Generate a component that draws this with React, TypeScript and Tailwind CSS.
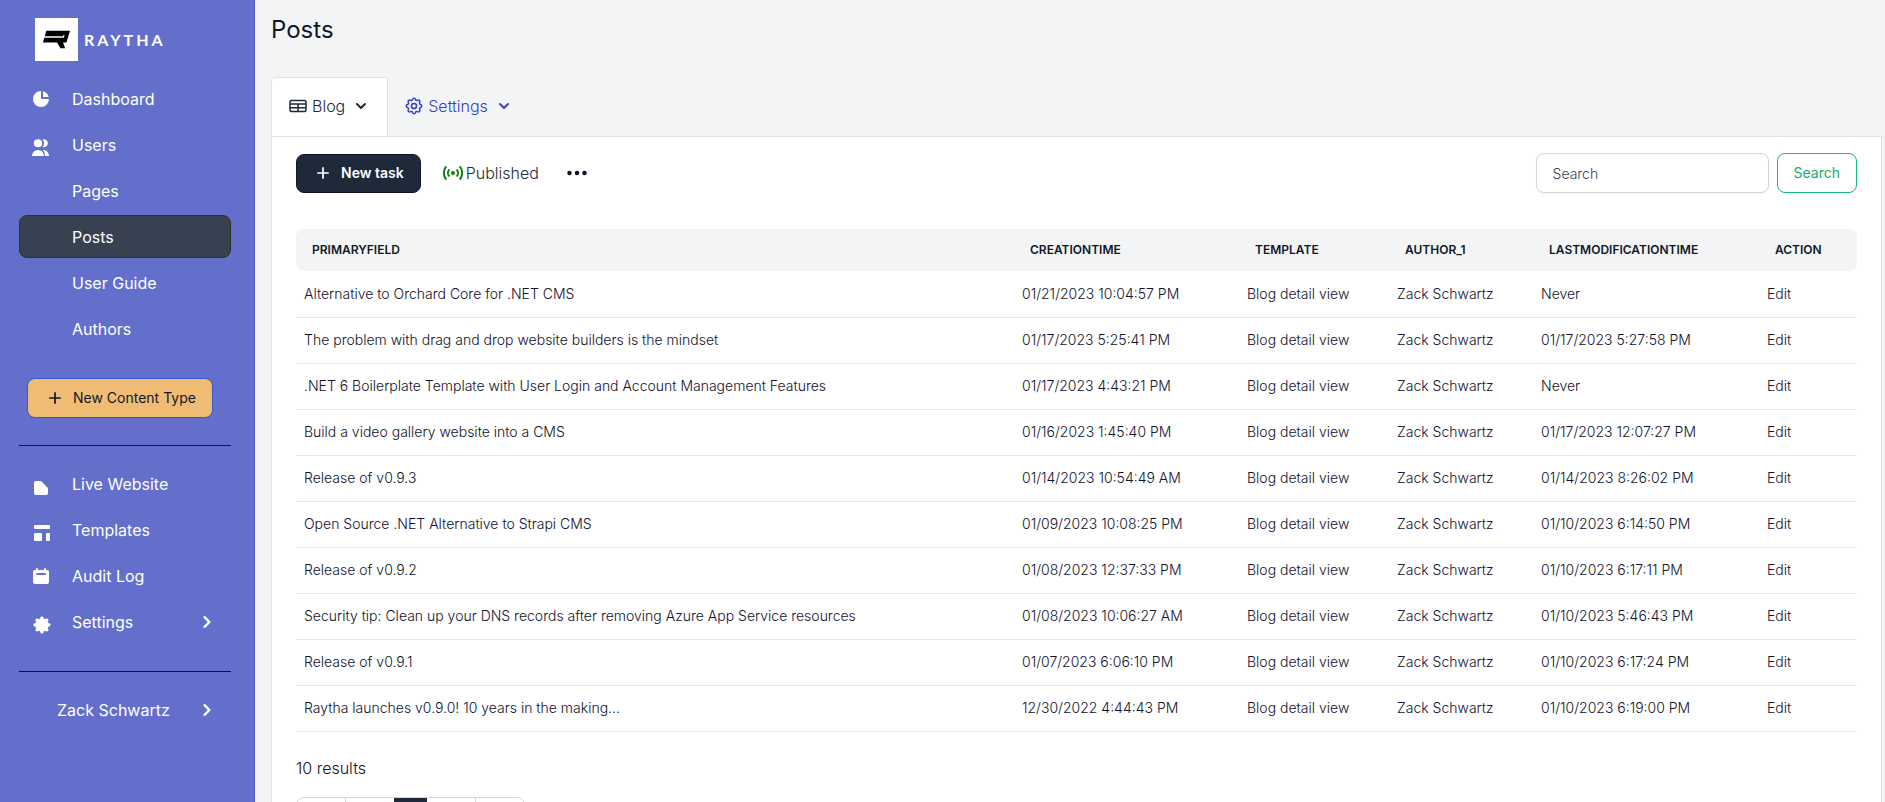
import React from 'react';
import { BsThreeDots } from 'react-icons/bs';
import { HiChartPie, HiChevronRight, HiChevronDown } from 'react-icons/hi';

const UsersIcon = () => (
  <svg className="w-5 h-5" viewBox="1 0 20 20" fill="currentColor">
    <ellipse cx="8" cy="6.200" rx="4.200" ry="4" />
    <path d="M12.600 2.400a4 4 0 1 1 0 7.600 5.600 5.600 0 0 0 0-7.600z" />
    <path d="M2 19c0-3.200 2.500-6 6-6s6 2.800 6 6zM12.800 13.100c3.400-.3 6.200 2.500 6.200 5.900h-4c0-2.400-.8-4.500-2.200-5.900z" />
  </svg>
);

const PageIcon = () => (
  <svg className="w-5 h-5" viewBox="0 0 20 20" fill="currentColor">
    <path d="M3 7a2 2 0 0 1 2-2h4.200a2 2 0 0 1 1.400.6l5.800 5.800a2 2 0 0 1 .6 1.400V17a2 2 0 0 1-2 2H5a2 2 0 0 1-2-2z" />
  </svg>
);

const TemplateIcon = () => (
  <svg className="w-5 h-5" viewBox="0 0 20 20" fill="currentColor">
    <rect x="3" y="3" width="16" height="4" rx="1" />
    <rect x="3" y="11" width="8" height="8" rx="1" />
    <rect x="15" y="11" width="4" height="8" rx="1" />
  </svg>
);

const LogIcon = () => (
  <svg className="w-5 h-5" viewBox="0 0 20 20" fill="currentColor">
    <path fillRule="evenodd" d="M6 2a1 1 0 0 0-1 1v1H4a2 2 0 0 0-2 2v10a2 2 0 0 0 2 2h12a2 2 0 0 0 2-2V6a2 2 0 0 0-2-2h-1V3a1 1 0 1 0-2 0v1H7V3a1 1 0 0 0-1-1zm0 5a1 1 0 0 0 0 2h8a1 1 0 1 0 0-2H6z" />
  </svg>
);

const GEAR_PATH =
  'M10.325 4.317c.426-1.756 2.924-1.756 3.350 0a1.724 1.724 0 0 0 2.573 1.066c1.543-.94 3.310.826 2.370 2.370a1.724 1.724 0 0 0 1.065 2.572c1.756.426 1.756 2.924 0 3.350a1.724 1.724 0 0 0-1.066 2.573c.94 1.543-.826 3.310-2.370 2.370a1.724 1.724 0 0 0-2.572 1.065c-.426 1.756-2.924 1.756-3.350 0a1.724 1.724 0 0 0-2.573-1.066c-1.543.94-3.310-.826-2.370-2.370a1.724 1.724 0 0 0-1.065-2.572c-1.756-.426-1.756-2.924 0-3.350a1.724 1.724 0 0 0 1.066-2.573c-.94-1.543.826-3.310 2.370-2.370.996.608 2.296.07 2.572-1.065z';

const GearIcon = () => (
  <svg className="w-5 h-5" viewBox="0.500 0.500 21 21" fill="currentColor">
    <path d={GEAR_PATH} />
  </svg>
);

const GearOutlineIcon = () => (
  <svg className="w-[18px] h-[18px]" viewBox="1.500 1.500 21 21" fill="none" stroke="currentColor" strokeWidth="1.800">
    <path d={GEAR_PATH} />
    <circle cx="12" cy="12" r="3" />
  </svg>
);

const TableIcon = () => (
  <svg className="w-[18px] h-[18px]" viewBox="0 0 18 18" fill="none" stroke="currentColor" strokeWidth="1.500">
    <rect x="1" y="3.500" width="16" height="11" rx="1.500" />
    <path d="M1 7h16M1 10.800h16M9 7v7.500" />
  </svg>
);

const BroadcastIcon = () => (
  <svg className="w-5 h-5" viewBox="0 0 20 20" fill="none" stroke="currentColor" strokeWidth="2">
    <circle cx="10" cy="10" r="2" fill="currentColor" stroke="none" />
    <path d="M6.400 6.500a5 5 0 0 0 0 7M13.600 6.500a5 5 0 0 1 0 7M3.300 3.400a10 10 0 0 0 0 13.200M16.700 3.400a10 10 0 0 1 0 13.200" />
  </svg>
);

const PlusIcon = () => (
  <svg className="w-4 h-4" viewBox="0 0 16 16" fill="none" stroke="currentColor" strokeWidth="1.700">
    <path d="M8 2.200v11.600M2.200 8h11.600" />
  </svg>
);

const mainLinks = [
  { label: 'Dashboard', icon: <HiChartPie className="w-5 h-5" /> },
  { label: 'Users', icon: <UsersIcon />, low: true },
  { label: 'Pages' },
  { label: 'Posts', active: true },
  { label: 'User Guide' },
  { label: 'Authors' },
];

const systemLinks = [
  { label: 'Live Website', icon: <PageIcon />, low: true },
  { label: 'Templates', icon: <TemplateIcon />, low: true },
  { label: 'Audit Log', icon: <LogIcon /> },
  { label: 'Settings', icon: <GearIcon />, low: true, more: true },
];

const posts = [
  ['Alternative to Orchard Core for .NET CMS', '01/21/2023 10:04:57 PM', 'Never'],
  ['The problem with drag and drop website builders is the mindset', '01/17/2023 5:25:41 PM', '01/17/2023 5:27:58 PM'],
  ['.NET 6 Boilerplate Template with User Login and Account Management Features', '01/17/2023 4:43:21 PM', 'Never'],
  ['Build a video gallery website into a CMS', '01/16/2023 1:45:40 PM', '01/17/2023 12:07:27 PM'],
  ['Release of v0.9.3', '01/14/2023 10:54:49 AM', '01/14/2023 8:26:02 PM'],
  ['Open Source .NET Alternative to Strapi CMS', '01/09/2023 10:08:25 PM', '01/10/2023 6:14:50 PM'],
  ['Release of v0.9.2', '01/08/2023 12:37:33 PM', '01/10/2023 6:17:11 PM'],
  ['Security tip: Clean up your DNS records after removing Azure App Service resources', '01/08/2023 10:06:27 AM', '01/10/2023 5:46:43 PM'],
  ['Release of v0.9.1', '01/07/2023 6:06:10 PM', '01/10/2023 6:17:24 PM'],
  ['Raytha launches v0.9.0! 10 years in the making...', '12/30/2022 4:44:43 PM', '01/10/2023 6:19:00 PM'],
];

type NavItemProps = {
  label: string;
  icon?: React.ReactNode;
  active?: boolean;
  more?: boolean;
  low?: boolean;
};

const NavItem = ({ label, icon, active, more, low }: NavItemProps) => (
  <li>
    <a
      href="#"
      className={`flex items-center h-[43px] px-[11px] rounded-lg border ${active ? 'bg-[#374151] border-[#28351f]' : 'border-transparent'}`}
    >
      <span className={`w-[41px] shrink-0 ${low ? 'pt-1' : ''}`}>{icon}</span>
      <span className="flex-1">{label}</span>
      {more && <HiChevronRight className="w-6 h-6" />}
    </a>
  </li>
);

const Sidebar = () => (
  <nav className="w-[255px] shrink-0 bg-[#646ecb] border-r border-[#5059c4] text-white pl-[19px] pr-[23px] pt-[18px]">
    <a href="#" className="flex items-center gap-1.5 pl-4 mb-4">
      <svg className="w-[43px] h-[43px] bg-white" viewBox="0 0 43 43">
        <path
          d="M11.300 12.700H35l-3.500 11.800H28l2.200 5.800h-4.700l-3.500-5.800H8l1.300-4.700h19.400l.9-2.900h-1.200l-.3 1.400H9.800z"
          fill="#000"
        />
      </svg>
      <span className="font-[Lato,sans-serif] font-bold text-base tracking-[3px]">RAYTHA</span>
    </a>
    <ul className="flex flex-col gap-[3px]">
      {mainLinks.map((link) => (
        <NavItem key={link.label} {...link} />
      ))}
    </ul>
    <button className="flex items-center gap-2.5 h-10 mt-7 ml-2 pl-[19px] pr-4 rounded-lg bg-[#f0bc74] border border-[#2f5bd0] text-gray-900 text-sm">
      <PlusIcon />
      New Content Type
    </button>
    <hr className="mt-[27px] mb-4 border-gray-900" />
    <ul className="flex flex-col gap-[3px]">
      {systemLinks.map((link) => (
        <NavItem key={link.label} {...link} />
      ))}
    </ul>
    <hr className="mt-7 mb-4 border-gray-900" />
    <a href="#" className="flex items-center justify-between h-[43px] pl-[38px] pr-3">
      Zack Schwartz
      <HiChevronRight className="w-6 h-6" />
    </a>
  </nav>
);

const Tabs = () => (
  <div className="flex">
    <button className="flex items-center h-[59px] -mb-px pl-[17px] pr-4 pb-0.5 bg-white border border-b-0 border-[#dee2e6] rounded-t text-gray-800 relative">
      <TableIcon />
      <span className="ml-[5px]">Blog</span>
      <HiChevronDown className="w-5 h-5 ml-1.5" />
    </button>
    <button className="flex items-center h-[59px] px-[17px] pb-0.5 text-[#3341c4]">
      <GearOutlineIcon />
      <span className="ml-[5px]">Settings</span>
      <HiChevronDown className="w-5 h-5 ml-1.5" />
    </button>
  </div>
);

const Toolbar = () => (
  <div className="flex items-center justify-between">
    <div className="flex items-center">
      <button className="flex items-center gap-2.5 h-[39px] pl-[18px] pr-4 rounded-lg bg-gray-800 border border-gray-900 text-white text-sm font-semibold">
        <PlusIcon />
        New task
      </button>
      <span className="flex items-center gap-[3px] ml-[22px] text-gray-800">
        <span className="text-[#118011]">
          <BroadcastIcon />
        </span>
        Published
      </span>
      <button className="ml-[26px]" aria-label="More actions">
        <BsThreeDots className="w-6 h-6" />
      </button>
    </div>
    <form className="flex gap-2">
      <input
        type="search"
        aria-label="Search"
        placeholder="Search"
        className="w-[233px] h-10 px-4 rounded-lg border border-gray-300 shadow-xs text-sm placeholder:text-gray-700"
      />
      <button type="button" className="h-10 px-4 rounded-lg border border-[#10b981] text-[#10b068] text-sm font-normal">
        Search
      </button>
    </form>
  </div>
);

const PostsTable = () => (
  <table className="w-full mt-9 text-sm text-left table-fixed">
    <colgroup>
      <col />
      <col className="w-[225px]" />
      <col className="w-[150px]" />
      <col className="w-[144px]" />
      <col className="w-[226px]" />
      <col className="w-[98px]" />
    </colgroup>
    <thead>
      <tr className="h-[42px] text-xs text-gray-900 [&>th]:bg-gray-100 [&>th]:px-4 [&>th]:font-semibold">
        <th className="rounded-l-lg">PRIMARYFIELD</th>
        <th>CREATIONTIME</th>
        <th>TEMPLATE</th>
        <th>AUTHOR_1</th>
        <th>LASTMODIFICATIONTIME</th>
        <th className="rounded-r-lg">ACTION</th>
      </tr>
    </thead>
    <tbody>
      {posts.map(([title, created, modified]) => (
        <tr key={title} className="h-[46px] border-b border-gray-200 [&>td]:px-2">
          <td>{title}</td>
          <td>{created}</td>
          <td>Blog detail view</td>
          <td>Zack Schwartz</td>
          <td>{modified}</td>
          <td>
            <a href="#">Edit</a>
          </td>
        </tr>
      ))}
    </tbody>
  </table>
);

const Pagination = () => (
  <div className="flex w-fit mt-[17px] rounded-lg border border-gray-300 overflow-hidden">
    <button className="w-[49px] h-9 border-r border-gray-300" aria-label="First page" />
    <button className="w-12 h-9" aria-label="Previous page" />
    <button className="w-[33px] h-9 bg-gray-800" aria-label="Page 1" />
    <button className="w-[49px] h-9 border-r border-gray-300" aria-label="Next page" />
    <button className="w-12 h-9" aria-label="Last page" />
  </div>
);

const App = () => {
  return (
    <div className="flex h-screen overflow-hidden bg-gray-100 font-[Inter,sans-serif] text-base font-normal">
      <Sidebar />
      <main className="flex-1 min-w-0 pl-4 pr-[3px] text-[#11122b] font-light">
        <h1 className="pt-3 text-2xl leading-9 font-normal text-gray-900">Posts</h1>
        <div className="mt-[29px]">
          <Tabs />
          <div className="min-h-screen bg-white border border-[#dee2e6] px-6 pt-4">
            <Toolbar />
            <PostsTable />
            <p className="mt-6">10 results</p>
            <Pagination />
          </div>
        </div>
      </main>
    </div>
  );
};

export default App;
